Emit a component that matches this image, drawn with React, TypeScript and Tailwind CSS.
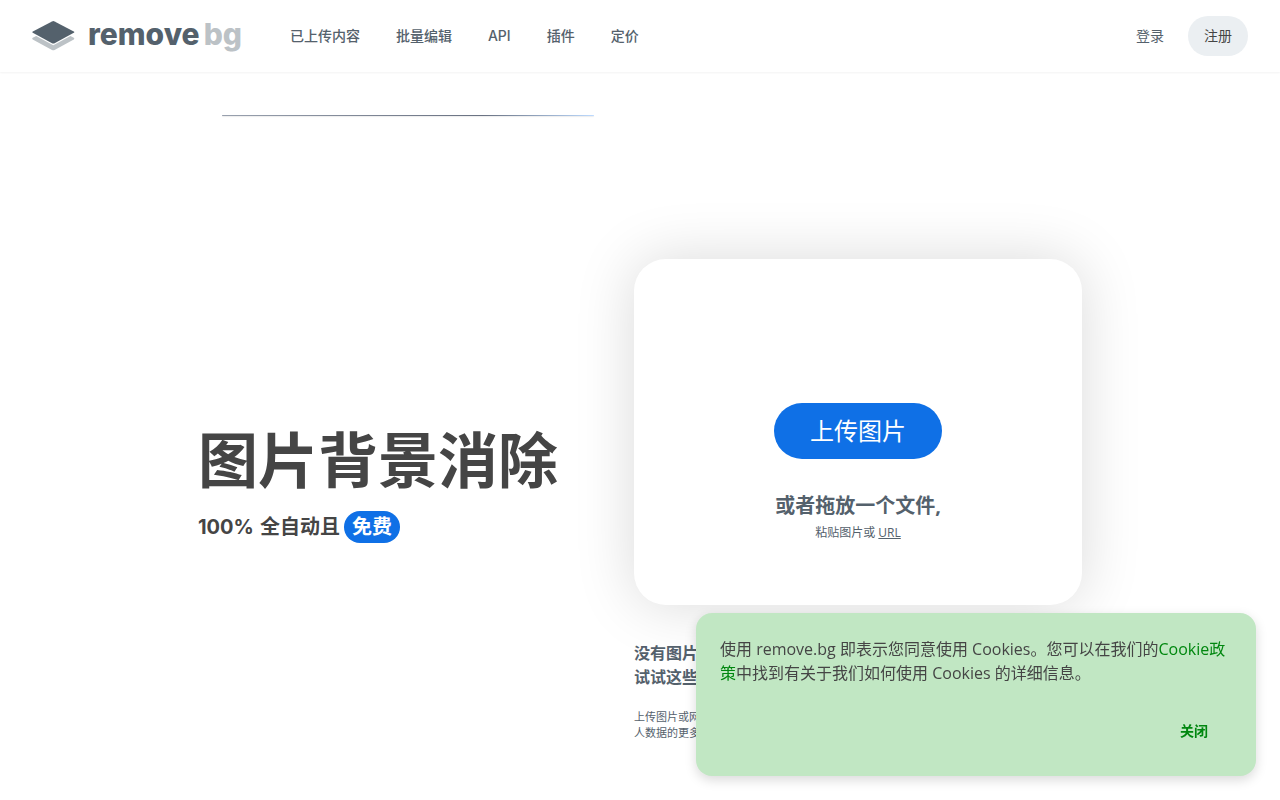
import { useState } from 'react';

const navItems = ['已上传内容', '批量编辑', 'API', '插件', '定价'];

function Logo() {
    return (
        <a href="#" className="flex items-center text-[#54616c]" aria-label="remove.bg">
            <svg width="44" height="32" viewBox="0 0 44 32" aria-hidden="true">
                <path
                    d="M0.7 16.8 L4.2 15 L21.3 24.2 L38.4 15 L41.8 16.8 Q42.8 17.6 41.8 18.4 L22.6 29 Q21.3 29.6 20 29 L0.7 18.4 Q-0.3 17.6 0.7 16.8Z"
                    fill="#bcc2c6"
                    transform="translate(0 1)"
                />
                <path
                    d="M20 1.4 Q21.3 0.8 22.6 1.4 L41.8 11.6 Q42.8 12.2 41.8 12.8 L22.6 23.3 Q21.3 23.9 20 23.3 L0.8 12.8 Q-0.2 12.2 0.8 11.6Z"
                    fill="#54616c"
                />
            </svg>
            <span className="flex items-center gap-1 pb-1 pl-3 font-['Inter',sans-serif] text-[30px] leading-8 font-extrabold">
                <span>remove</span>
                <span className="text-[#bcc2c6]">bg</span>
            </span>
        </a>
    );
}

function Header() {
    return (
        <header className="flex h-18 items-center bg-white px-8 font-['Inter','Noto_Sans_CJK_SC',sans-serif] text-sm text-[#54616c] shadow-[0_1px_2px_rgba(0,0,0,0.05)]">
            <Logo />
            <nav className="ml-12 flex gap-9">
                {navItems.map((item) => (
                    <a key={item} href="#" className="font-[450]">
                        {item}
                    </a>
                ))}
            </nav>
            <div className="ml-auto flex items-center gap-6">
                <a href="#">登录</a>
                <button type="button" className="h-10 rounded-full bg-[#ebeff2] px-4 text-[#454545]">
                    注册
                </button>
            </div>
        </header>
    );
}

function Intro() {
    return (
        <div className="w-[420px]">
            <div className="mx-6 h-px rounded-full bg-linear-to-r from-gray-400 via-gray-500 via-70% to-blue-200 shadow-[0_1px_1px_rgba(0,0,0,0.08)]" />
            <h1 className="mt-[308px] text-[60px] leading-[72px] font-bold">图片背景消除</h1>
            <p className="mt-[15px] flex items-center gap-1 font-['Inter','Noto_Sans_CJK_SC',sans-serif] text-xl leading-8 font-bold">
                <span className="flex gap-1.5">
                    <span>100%</span>
                    <span>全自动且</span>
                </span>
                <span className="rounded-full bg-[#0f70e6] px-2 text-white">免费</span>
            </p>
        </div>
    );
}

function Uploader() {
    return (
        <div className="mt-36 w-md text-[#54616c]">
            <div className="flex flex-col items-center rounded-4xl bg-white pt-36 pb-[63px] shadow-[0_0_60px_rgba(0,0,0,0.15)]">
                <button type="button" className="h-14 rounded-full bg-[#0f70e6] px-9 text-2xl text-white">
                    上传图片
                </button>
                <p className="mt-[33px] text-xl leading-7 font-bold">或者拖放一个文件,</p>
                <p className="mt-1 text-xs leading-[18px]">
                    粘贴图片或{' '}
                    <a href="#" className="underline">
                        URL
                    </a>
                </p>
            </div>
            <p className="mt-9 leading-6 font-bold">
                没有图片？
                <br />
                试试这些图片：
            </p>
            <p className="mt-5 text-[11px] leading-4">
                上传图片或网址即表示您同意我们的服务条款。要了解有关我们如何处理您的个
                <br />
                人数据的更多信息，请查看我们的隐私政策。
            </p>
        </div>
    );
}

function CookieBanner({ onClose }: { onClose: () => void }) {
    return (
        <div className="fixed right-6 bottom-6 w-[560px] rounded-2xl bg-[#c1e7c3] p-6 text-[#454545] shadow-[0_4px_12px_rgba(0,0,0,0.15)]">
            <p className="leading-6">
                使用 remove.bg 即表示您同意使用 Cookies。您可以在我们的
                <a href="#" className="text-[#00870f]">
                    Cookie政策
                </a>
                中找到有关于我们如何使用 Cookies 的详细信息。
            </p>
            <div className="mt-6 flex justify-end">
                <button type="button" onClick={onClose} className="h-[43px] px-6 text-sm font-bold text-[#00870f]">
                    关闭
                </button>
            </div>
        </div>
    );
}

export default function App() {
    const [showCookies, setShowCookies] = useState(true);

    return (
        <div className="min-h-screen bg-white font-['Open_Sans','Noto_Sans_CJK_SC',sans-serif] text-[#454545]">
            <Header />
            <main className="flex justify-center gap-4 pt-[43px]">
                <Intro />
                <Uploader />
            </main>
            {showCookies && <CookieBanner onClose={() => setShowCookies(false)} />}
        </div>
    );
}
